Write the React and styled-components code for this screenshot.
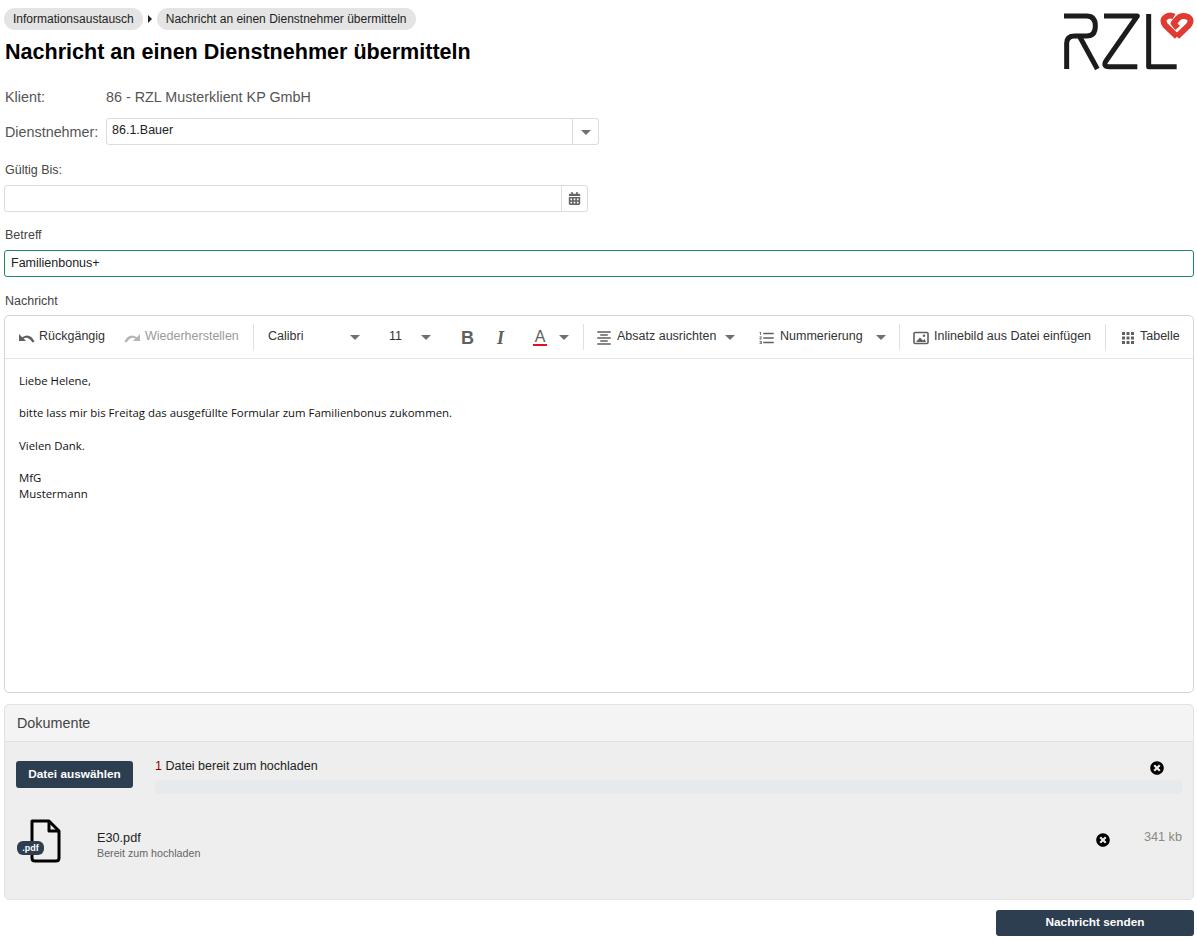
import React from "react";
import styled, { createGlobalStyle } from "styled-components";
import { MdFormatAlignCenter, MdFormatListNumbered } from "react-icons/md";
import { FaCalendarAlt, FaTimesCircle } from "react-icons/fa";

const Global = createGlobalStyle`
  html, body { margin: 0; padding: 0; background: #fff; }
  body { font-family: "Liberation Sans", Arial, sans-serif; font-size: 14px; color: #333; }
  * { box-sizing: border-box; }
`;
const Page = styled.div`
  padding: 8px 3px 0 4px;
  height: 941px;
  overflow: hidden;
`;
const Header = styled.header`
  display: flex;
  justify-content: space-between;
  align-items: flex-start;
  height: 79px;
`;
const Logo = styled.svg`
  display: block;
  margin: 4px 0 0 0;
  flex: none;
`;
const Crumbs = styled.nav`
  display: flex;
  align-items: center;
  height: 22px;
`;
const Crumb = styled.span`
  display: flex;
  align-items: center;
  height: 22px;
  padding: 0 9px;
  border-radius: 11px;
  background: #e4e4e4;
  font-size: 12px;
  color: #222;
`;
const CrumbArrow = styled.span`
  width: 0;
  height: 0;
  margin: 0 5px 0 5px;
  border-left: 4px solid #222;
  border-top: 4px solid transparent;
  border-bottom: 4px solid transparent;
`;
const Title = styled.h1`
  margin: 8px 0 0 1px;
  font-size: 21.55px;
  line-height: 28px;
  font-weight: 700;
  color: #000;
`;
const Row = styled.div`
  display: flex;
  align-items: center;
  height: ${p => p.$h}px;
  margin-top: ${p => p.$mt || 0}px;
`;
const RowLabel = styled.span`
  width: 102px;
  padding-left: 1px;
  font-size: 14.35px;
  color: #555;
  flex: none;
`;
const RowValue = styled.span`
  font-size: 14.35px;
  color: #555;
`;
const FieldBox = styled.div`
  display: flex;
  height: 27px;
  width: ${p => p.$w ? `${p.$w}px` : "100%"};
  margin-top: ${p => p.$mt || 0}px;
  border: 1px solid ${p => p.$focus ? "#1e8a5a" : "#dcdcdc"};
  border-radius: 3px;
  background: #fff;
  font-size: 12.5px;
  color: #222;
`;
const FieldText = styled.div`
  flex: 1;
  padding: ${p => p.$pt || 4}px 5px 0 ${p => p.$pl || 5}px;
`;
const FieldAddon = styled.div`
  width: 26px;
  border-left: 1px solid #dcdcdc;
  display: flex;
  align-items: center;
  justify-content: center;
  color: #666;
  flex: none;
`;
const Caret = styled.span`
  display: inline-block;
  flex: none;
  width: 0;
  height: 0;
  margin-left: ${p => p.$ml || 0}px;
  margin-top: 2px;
  border-top: 5px solid #707070;
  border-left: 5px solid transparent;
  border-right: 5px solid transparent;
`;
const FieldLabel = styled.div`
  height: 18px;
  line-height: 18px;
  margin-top: ${p => p.$mt}px;
  padding-left: 1px;
  font-size: 12.5px;
  color: #444;
`;
const Editor = styled.section`
  margin-top: 5px;
  height: 378px;
  border: 1px solid #d5d5d5;
  border-radius: 5px;
  background: #fff;
`;
const Toolbar = styled.div`
  display: flex;
  align-items: center;
  height: 43px;
  border-bottom: 1px solid #e2e4e8;
  padding: 0 0 2px 14px;
  font-size: 12.5px;
  color: #333;
`;
const Tool = styled.div`
  display: flex;
  align-items: center;
  flex: none;
  width: ${p => p.$w}px;
  gap: ${p => p.$gap ?? 4}px;
  color: ${p => p.$off ? "#9a9a9a" : "#333"};
  justify-content: ${p => p.$between ? "space-between" : "flex-start"};
  padding-right: ${p => p.$pr || 0}px;
  svg { flex: none; margin-top: 3px; color: ${p => p.$off ? "#b5b5b5" : "#606060"}; }
`;
const Sep = styled.span`
  width: 1px;
  height: 26px;
  margin-top: 2px;
  background: #e0e0e0;
  flex: none;
  margin-right: ${p => p.$mr}px;
`;
const BoldMark = styled.span`
  display: block;
  margin: 3px 0 0 3px;
  font-size: 18px;
  line-height: 18px;
  font-weight: 700;
  color: #606060;
`;
const ItalicMark = styled.span`
  display: block;
  margin: 3px 0 0 4px;
  font-family: "Liberation Serif", serif;
  font-size: 18px;
  line-height: 18px;
  font-weight: 700;
  font-style: italic;
  color: #606060;
`;
const FontA = styled.span`
  display: inline-block;
  width: 14px;
  margin: 3px 0 0 0;
  text-align: center;
  font-size: 16px;
  line-height: 15px;
  color: #606060;
  border-bottom: 2px solid #e01020;
`;
const Body = styled.div`
  padding: 14px;
  font-family: "Open Sans", sans-serif;
  font-size: 11.4px;
  line-height: 16.2px;
  color: #111;
`;
const BodyLine = styled.div`
  min-height: 16.2px;
`;
const Panel = styled.section`
  margin-top: 11px;
  height: 196px;
  border: 1px solid #e2e2e2;
  border-radius: 5px;
  background: #eeeeee;
`;
const PanelHead = styled.div`
  height: 37px;
  padding-left: 12px;
  display: flex;
  align-items: center;
  background: #f4f4f4;
  border-bottom: 1px solid #e2e2e2;
  border-radius: 5px 5px 0 0;
  font-size: 14.35px;
  color: #444;
`;
const UploadRow = styled.div`
  display: flex;
  padding: 13px 11px 0 11px;
`;
const DarkButton = styled.button`
  width: ${p => p.$w}px;
  height: ${p => p.$h}px;
  margin-top: ${p => p.$mt || 0}px;
  border: 0;
  border-radius: 3px;
  background: #2d3e50;
  color: #fff;
  font: 700 11.8px "Liberation Sans", Arial, sans-serif;
  flex: none;
  padding: 0 0 2px 0;
`;
const UploadInfo = styled.div`
  flex: 1;
  margin-left: 22px;
`;
const UploadTop = styled.div`
  display: flex;
  justify-content: space-between;
  align-items: center;
  height: 22px;
  font-size: 12.5px;
  color: #222;
  padding-right: 18px;
  svg { margin-top: 4px; }
`;
const Count = styled.b`
  font-weight: 400;
  color: #900;
`;
const Progress = styled.div`
  height: 14px;
  margin-top: 3px;
  border-radius: 4px;
  background: #e7eaed;
`;
const FileRow = styled.div`
  display: flex;
  align-items: flex-start;
  padding: 25px 11px 0 12px;
`;
const FileIcon = styled.div`
  width: 80px;
  height: 46px;
  position: relative;
  flex: none;
`;
const PdfOutline = styled.svg`
  position: absolute;
  left: 12px;
  top: 0;
`;
const PdfBadge = styled.span`
  position: absolute;
  left: 0;
  top: 22px;
  height: 14px;
  width: 27px;
  border-radius: 6px;
  background: #2d3e50;
  color: #fff;
  font-size: 9px;
  font-weight: 700;
  line-height: 14px;
  text-align: center;
`;
const FileInfo = styled.div`
  flex: 1;
  padding-top: 11px;
`;
const FileName = styled.div`
  font-size: 12.7px;
  line-height: 16px;
  color: #222;
`;
const FileState = styled.div`
  font-size: 10.7px;
  line-height: 14px;
  color: #666;
`;
const Remove = styled.span`
  display: flex;
  margin: 14px 34px 0 0;
  color: #000;
`;
const FileSize = styled.div`
  padding-top: 11px;
  font-size: 12.7px;
  color: #8a8a80;
`;
const Actions = styled.div`
  display: flex;
  justify-content: flex-end;
  margin-top: 10px;
`;

const RzlLogo = () => (
  <Logo width="131" height="58" viewBox="69 36 393 174" fill="none">
    <g stroke="#1c1c1e" strokeWidth="15" strokeLinejoin="round">
      <path d="M72 48 H140 Q166 48 166 78 Q166 108 140 108 H104 Q80 108 80 130 V207" />
      <path d="M118 108 L172 207" />
      <path d="M192 48 H292 L200 180 Q186 200 208 200 H292" />
      <path d="M326 42 V200 H410" />
    </g>
    <g stroke="#e03a32" strokeWidth="18" strokeLinejoin="round">
      <path d="M411 110 L376 76 Q364 60 378 51 Q390 43 402 50" />
      <path d="M411 110 L446 76 Q458 60 444 51 Q426 43 414 55 L401 70 L413 84" />
    </g>
  </Logo>
);

const UndoIcon = ({ flip }) => (
  <svg width="16" height="14" viewBox="0 0 16 14" fill="currentColor" style={flip ? { transform: "scaleX(-1)" } : undefined}>
    <path d="M0 3 V10 H7 L4.6 7.6 Q9 4.8 13.6 11.5 L15.6 10.6 Q11 1.4 3.2 6.2 Z" />
  </svg>
);

const ImageIcon = () => (
  <svg width="16" height="14" viewBox="0 0 16 14" fill="none">
    <rect x="1" y="1.5" width="14" height="11" rx="1" stroke="currentColor" strokeWidth="1.6" />
    <path d="M3 11 L7 6.5 L10 9.5 L11.5 8 L13 11 Z" fill="currentColor" />
    <circle cx="11" cy="4.8" r="1.2" fill="currentColor" />
  </svg>
);

const TableDots = () => (
  <svg width="14" height="14" viewBox="0 0 14 14" fill="currentColor">
    {[1, 5.5, 10].map(x => [1, 5.5, 10].map(y => <rect key={`${x}-${y}`} x={x} y={y} width="3" height="3" />))}
  </svg>
);

export default function App() {
  return (
    <Page>
      <Global />
      <Header>
        <div>
          <Crumbs>
            <Crumb>Informationsaustausch</Crumb>
            <CrumbArrow />
            <Crumb>Nachricht an einen Dienstnehmer übermitteln</Crumb>
          </Crumbs>
          <Title>Nachricht an einen Dienstnehmer übermitteln</Title>
        </div>
        <RzlLogo />
      </Header>
      <Row $h={20}>
        <RowLabel>Klient:</RowLabel>
        <RowValue>86 - RZL Musterklient KP GmbH</RowValue>
      </Row>
      <Row $h={27} $mt={11}>
        <RowLabel>Dienstnehmer:</RowLabel>
        <FieldBox $w={493}>
          <FieldText $pt={4}>86.1.Bauer</FieldText>
          <FieldAddon><Caret /></FieldAddon>
        </FieldBox>
      </Row>
      <FieldLabel $mt={16}>Gültig Bis:</FieldLabel>
      <FieldBox $w={584} $mt={6}>
        <FieldText />
        <FieldAddon><FaCalendarAlt size={13} /></FieldAddon>
      </FieldBox>
      <FieldLabel $mt={14}>Betreff</FieldLabel>
      <FieldBox $focus $mt={6}>
        <FieldText $pt={5} $pl={6}>Familienbonus+</FieldText>
      </FieldBox>
      <FieldLabel $mt={15}>Nachricht</FieldLabel>
      <Editor>
        <Toolbar>
          <Tool $w={105} $gap={4}><UndoIcon />Rückgängig</Tool>
          <Tool $w={129} $off $gap={5}><UndoIcon flip />Wiederherstellen</Tool>
          <Sep $mr={14} />
          <Tool $w={94} $between $pr={2}>Calibri<Caret /></Tool>
          <Tool $w={27} />
          <Tool $w={44} $between $pr={2}>11<Caret /></Tool>
          <Tool $w={25} />
          <Tool $w={35}><BoldMark>B</BoldMark></Tool>
          <Tool $w={40}><ItalicMark>I</ItalicMark></Tool>
          <Tool $w={38} $between $pr={2}><FontA>A</FontA><Caret /></Tool>
          <Tool $w={12} />
          <Sep $mr={11} />
          <Tool $w={141} $gap={4}><MdFormatAlignCenter size={18} />Absatz ausrichten<Caret $ml={5} /></Tool>
          <Tool $w={22} />
          <Tool $w={141} $gap={4}><MdFormatListNumbered size={18} />Nummerierung<Caret $ml={9} /></Tool>
          <Sep $mr={13} />
          <Tool $w={192} $gap={5}><ImageIcon />Inlinebild aus Datei einfügen</Tool>
          <Sep $mr={15} />
          <Tool $w={60} $gap={5}><TableDots />Tabelle</Tool>
        </Toolbar>
        <Body>
          <BodyLine>Liebe Helene,</BodyLine>
          <BodyLine />
          <BodyLine>bitte lass mir bis Freitag das ausgefüllte Formular zum Familienbonus zukommen.</BodyLine>
          <BodyLine />
          <BodyLine>Vielen Dank.</BodyLine>
          <BodyLine />
          <BodyLine>MfG</BodyLine>
          <BodyLine>Mustermann</BodyLine>
        </Body>
      </Editor>
      <Panel>
        <PanelHead>Dokumente</PanelHead>
        <UploadRow>
          <DarkButton $w={117} $h={27} $mt={6}>Datei auswählen</DarkButton>
          <UploadInfo>
            <UploadTop>
              <span><Count>1</Count> Datei bereit zum hochladen</span>
              <FaTimesCircle size={14} color="#000" />
            </UploadTop>
            <Progress />
          </UploadInfo>
        </UploadRow>
        <FileRow>
          <FileIcon>
            <PdfOutline width="34" height="44" viewBox="0 0 34 44" fill="none">
              <path d="M3 2 H20 L30 12 V39 Q30 42 27 42 H6 Q3 42 3 39 Z" stroke="#000" strokeWidth="3" strokeLinejoin="round" />
              <path d="M20 2 V12 H30" stroke="#000" strokeWidth="3" strokeLinejoin="round" />
            </PdfOutline>
            <PdfBadge>.pdf</PdfBadge>
          </FileIcon>
          <FileInfo>
            <FileName>E30.pdf</FileName>
            <FileState>Bereit zum hochladen</FileState>
          </FileInfo>
          <Remove><FaTimesCircle size={14} /></Remove>
          <FileSize>341 kb</FileSize>
        </FileRow>
      </Panel>
      <Actions>
        <DarkButton $w={198} $h={26}>Nachricht senden</DarkButton>
      </Actions>
    </Page>
  );
}
